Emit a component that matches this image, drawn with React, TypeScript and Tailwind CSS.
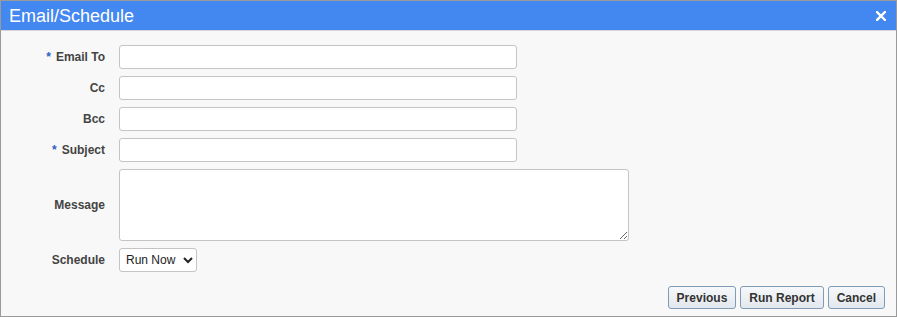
import { useState } from "react";

const labelCls =
  "flex items-center justify-end text-[12px] font-bold text-[#444]";
const inputCls =
  "h-[24px] w-[398px] rounded-[3px] border border-[#c4c4c4] bg-white px-1 text-[13px] outline-none";
const btnCls =
  "h-[23px] rounded-[3px] border border-[#7f9bb5] bg-[linear-gradient(#f6f8fa,#e3e8ee)] px-[8px] text-[12px] font-bold text-[#333]";

function Req() {
  return <span className="mr-[5px] text-[#2f5fc4]">*</span>;
}

export default function App() {
  const [schedule, setSchedule] = useState("now");

  return (
    <div
      className="flex h-[317px] w-[897px] flex-col border border-[#9a9a9a] bg-[#f8f8f8]"
      style={{ fontFamily: '"Liberation Sans", Arial, sans-serif' }}
    >
      <div className="flex h-[29px] shrink-0 items-center justify-between bg-[#4387f1] pl-[8px] pr-[10px] text-white">
        <span className="text-[18px] leading-none">Email/Schedule</span>
        <svg width="10" height="10" viewBox="0 0 10 10">
          <path
            d="M1 1 L9 9 M9 1 L1 9"
            stroke="white"
            strokeWidth="2.4"
            strokeLinecap="square"
          />
        </svg>
      </div>
      <div className="h-px bg-[#d6d6d6]" />

      <form className="flex flex-1 flex-col" onSubmit={(e) => e.preventDefault()}>
        <div className="mt-[14px] grid grid-cols-[104px_1fr] gap-x-[14px] gap-y-[7px]">
          <label className={labelCls} htmlFor="email_to">
            <Req />
            Email To
          </label>
          <input id="email_to" type="text" className={inputCls} />

          <label className={labelCls} htmlFor="cc">
            Cc
          </label>
          <input id="cc" type="text" className={inputCls} />

          <label className={labelCls} htmlFor="bcc">
            Bcc
          </label>
          <input id="bcc" type="text" className={inputCls} />

          <label className={labelCls} htmlFor="subject">
            <Req />
            Subject
          </label>
          <input id="subject" type="text" className={inputCls} />

          <label className={labelCls} htmlFor="message">
            Message
          </label>
          <textarea
            id="message"
            className="h-[72px] w-[510px] rounded-[3px] border border-[#c4c4c4] bg-white px-1 text-[13px] outline-none"
          />

          <label className={labelCls} htmlFor="schedule">
            Schedule
          </label>
          <select
            id="schedule"
            value={schedule}
            onChange={(e) => setSchedule(e.target.value)}
            className="h-[24px] w-[78px] rounded-[3px] border border-[#c4c4c4] bg-white pl-[2px] text-[12px] text-[#222]"
          >
            <option value="now">Run Now</option>
            <option value="later">Schedule</option>
          </select>
        </div>

        <div className="mt-auto mb-[7px] mr-[11px] flex justify-end gap-[4px]">
          <button type="button" className={btnCls}>
            Previous
          </button>
          <button type="submit" className={btnCls}>
            Run Report
          </button>
          <button type="button" className={btnCls}>
            Cancel
          </button>
        </div>
      </form>
    </div>
  );
}
